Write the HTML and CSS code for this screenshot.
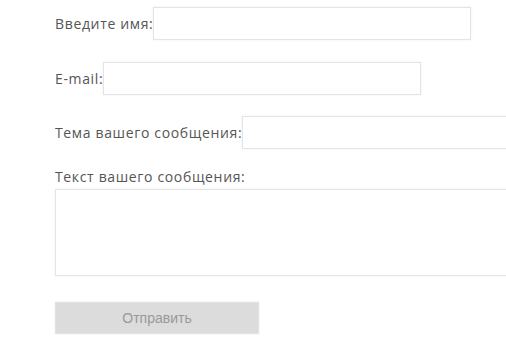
FILE: index.html
```html
<!DOCTYPE html>
<html lang="ru">

<head>
    <meta charset="UTF-8">
    <meta name="viewport" content="width=device-width, initial-scale=1.0">
    <title>Обратная связь</title>
    <link rel="stylesheet" href="styles.css">
</head>

<body>
    <form class="feedback">
        <div class="row">
            <label for="name">Введите имя:</label>
            <input type="text" id="name" class="field">
        </div>
        <div class="row">
            <label for="email">E-mail:</label>
            <input type="text" id="email" class="field">
        </div>
        <div class="row last">
            <label for="subject">Тема вашего сообщения:</label>
            <input type="text" id="subject" class="field">
        </div>
        <div class="row-block">
            <label for="message">Текст вашего сообщения:</label>
            <textarea id="message" class="message"></textarea>
        </div>
        <button type="button" class="send">Отправить</button>
    </form>
</body>

</html>
```

FILE: styles.css
```css
* {
    padding: 0;
    margin: 0;
    box-sizing: border-box;
}

body {
    width: 506px;
    height: 350px;
    overflow: hidden;
    background: #fff;
    font: 14px "Open Sans", "Liberation Sans", sans-serif;
    letter-spacing: 0.65px;
    color: #555;
}

.feedback {
    padding: 7px 0 0 55px;
}

.row {
    display: flex;
    align-items: center;
    height: 33px;
    margin-bottom: 22px;
    white-space: nowrap;
}

.row:nth-child(2) {
    margin-bottom: 21px;
}

.row.last {
    margin-bottom: 19px;
}

.field {
    flex: none;
    width: 318px;
    height: 33px;
    border: 1px solid #e4e4e4;
    box-shadow: 0 0 3px rgba(0, 0, 0, 0.06);
    background: #fff;
    outline: none;
}

.row-block label {
    display: block;
    line-height: 18px;
    margin-bottom: 3px;
}

.message {
    display: block;
    width: 500px;
    height: 87px;
    border: 1px solid #e4e4e4;
    box-shadow: 0 0 3px rgba(0, 0, 0, 0.06);
    resize: none;
    outline: none;
}

.send {
    display: block;
    margin-top: 26px;
    width: 204px;
    height: 32px;
    border: 1px solid #e2e2e2;
    background: #dcdcdc;
    box-shadow: 0 0 2px rgba(0, 0, 0, 0.08);
    font: 14px "Liberation Sans", Arial, sans-serif;
    letter-spacing: 0;
    color: #999;
}
```
